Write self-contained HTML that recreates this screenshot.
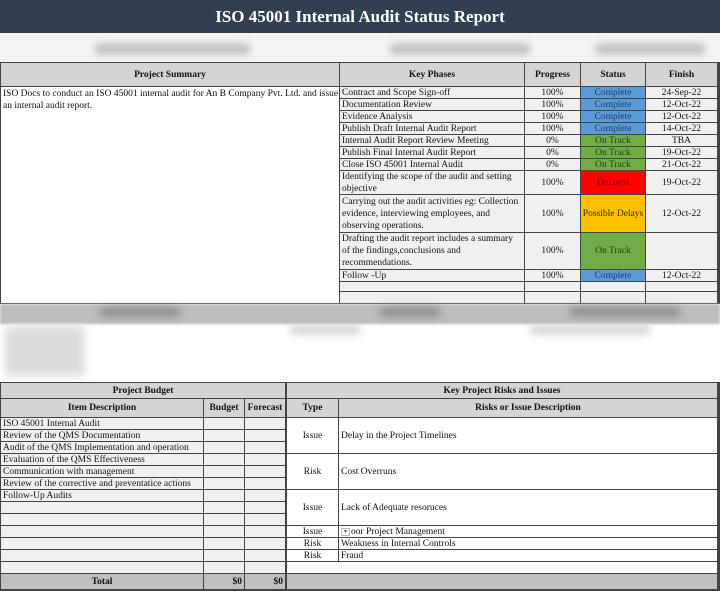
<!DOCTYPE html>
<html><head><meta charset="utf-8"><style>
*{margin:0;padding:0;box-sizing:border-box}
body{width:720px;height:591px;position:relative;background:#fff;font-family:"Liberation Serif",serif;font-size:9.5px;color:#111;overflow:hidden}
.a{position:absolute}
.c{position:absolute;border-right:1px solid #444;border-bottom:1px solid #444;display:flex;align-items:center;padding:0 2px;line-height:12px;overflow:hidden;white-space:nowrap}
.w{white-space:normal}
.m{justify-content:center;text-align:center}
.h{background:#d4d4d4;font-weight:bold;justify-content:center}
.g{background:#f0f0f0}
.bl{background:#5b9bd5;color:#1f3864}
.gr{background:#70ad47;color:#1e3a10}
.rd{background:#ff0000;color:#7a0000}
.yl{background:#ffc000;color:#3a2a00}
.blur{position:absolute;background:#bbb;filter:blur(4px);border-radius:3px}
</style></head><body>
<div class="a" style="left:0;top:0;width:720px;height:33px;background:#323f50;color:#fff;font-weight:bold;font-size:17px;display:flex;align-items:center;justify-content:center">ISO 45001 Internal Audit Status Report</div>
<div class="a" style="left:0;top:33px;width:720px;height:29px;background:#f4f4f4"></div>
<div class="blur" style="left:95px;top:44px;width:155px;height:10px"></div>
<div class="blur" style="left:390px;top:44px;width:140px;height:10px"></div>
<div class="blur" style="left:595px;top:44px;width:110px;height:10px"></div>
<div class="a" style="left:0;top:62px;width:720px;height:242px;border:1px solid #444;border-right:2px solid #444"></div>
<!-- header -->
<div class="c h" style="left:1px;top:63px;width:339px;height:24px">Project Summary</div>
<div class="c h" style="left:340px;top:63px;width:185px;height:24px">Key Phases</div>
<div class="c h" style="left:525px;top:63px;width:56px;height:24px">Progress</div>
<div class="c h" style="left:581px;top:63px;width:65px;height:24px">Status</div>
<div class="c h" style="left:646px;top:63px;width:72px;height:24px">Finish</div>
<div class="a w" style="left:3px;top:88px;width:336px;line-height:12px">ISO Docs to conduct an ISO 45001 internal audit for An B Company Pvt. Ltd. and issue an internal audit report.</div>
<div class="a" style="left:339px;top:87px;width:1px;height:217px;background:#444"></div>
<!-- rows -->
<div class="c g" style="left:340px;top:87px;width:185px;height:12px">Contract and Scope Sign-off</div><div class="c g m" style="left:525px;top:87px;width:56px;height:12px">100%</div><div class="c bl m" style="left:581px;top:87px;width:65px;height:12px">Complete</div><div class="c g m" style="left:646px;top:87px;width:72px;height:12px">24-Sep-22</div>
<div class="c g" style="left:340px;top:99px;width:185px;height:12px">Documentation Review</div><div class="c g m" style="left:525px;top:99px;width:56px;height:12px">100%</div><div class="c bl m" style="left:581px;top:99px;width:65px;height:12px">Complete</div><div class="c g m" style="left:646px;top:99px;width:72px;height:12px">12-Oct-22</div>
<div class="c g" style="left:340px;top:111px;width:185px;height:12px">Evidence Analysis</div><div class="c g m" style="left:525px;top:111px;width:56px;height:12px">100%</div><div class="c bl m" style="left:581px;top:111px;width:65px;height:12px">Complete</div><div class="c g m" style="left:646px;top:111px;width:72px;height:12px">12-Oct-22</div>
<div class="c g" style="left:340px;top:123px;width:185px;height:12px">Publish Draft Internal Audit Report</div><div class="c g m" style="left:525px;top:123px;width:56px;height:12px">100%</div><div class="c bl m" style="left:581px;top:123px;width:65px;height:12px">Complete</div><div class="c g m" style="left:646px;top:123px;width:72px;height:12px">14-Oct-22</div>
<div class="c g" style="left:340px;top:135px;width:185px;height:12px">Internal Audit Report Review Meeting</div><div class="c g m" style="left:525px;top:135px;width:56px;height:12px">0%</div><div class="c gr m" style="left:581px;top:135px;width:65px;height:12px">On Track</div><div class="c g m" style="left:646px;top:135px;width:72px;height:12px">TBA</div>
<div class="c g" style="left:340px;top:147px;width:185px;height:12px">Publish Final Internal Audit Report</div><div class="c g m" style="left:525px;top:147px;width:56px;height:12px">0%</div><div class="c gr m" style="left:581px;top:147px;width:65px;height:12px">On Track</div><div class="c g m" style="left:646px;top:147px;width:72px;height:12px">19-Oct-22</div>
<div class="c g" style="left:340px;top:159px;width:185px;height:12px">Close ISO 45001 Internal Audit</div><div class="c g m" style="left:525px;top:159px;width:56px;height:12px">0%</div><div class="c gr m" style="left:581px;top:159px;width:65px;height:12px">On Track</div><div class="c g m" style="left:646px;top:159px;width:72px;height:12px">21-Oct-22</div>
<div class="c g w" style="left:340px;top:171px;width:185px;height:24px">Identifying the scope of the audit and setting objective</div><div class="c g m" style="left:525px;top:171px;width:56px;height:24px">100%</div><div class="c rd m" style="left:581px;top:171px;width:65px;height:24px">Delayed</div><div class="c g m" style="left:646px;top:171px;width:72px;height:24px">19-Oct-22</div>
<div class="c g w" style="left:340px;top:195px;width:185px;height:38px">Carrying out the audit activities eg: Collection evidence, interviewing employees, and observing operations.</div><div class="c g m" style="left:525px;top:195px;width:56px;height:38px">100%</div><div class="c yl m" style="left:581px;top:195px;width:65px;height:38px">Possible Delays</div><div class="c g m" style="left:646px;top:195px;width:72px;height:38px">12-Oct-22</div>
<div class="c g w" style="left:340px;top:233px;width:185px;height:37px">Drafting the audit report includes a summary of the findings,conclusions and recommendations.</div><div class="c g m" style="left:525px;top:233px;width:56px;height:37px">100%</div><div class="c gr m" style="left:581px;top:233px;width:65px;height:37px">On Track</div><div class="c g m" style="left:646px;top:233px;width:72px;height:37px"></div>
<div class="c g" style="left:340px;top:270px;width:185px;height:12px">Follow -Up</div><div class="c g m" style="left:525px;top:270px;width:56px;height:12px">100%</div><div class="c bl m" style="left:581px;top:270px;width:65px;height:12px">Complete</div><div class="c g m" style="left:646px;top:270px;width:72px;height:12px">12-Oct-22</div>
<div class="c g" style="left:340px;top:282px;width:185px;height:10px"></div><div class="c g" style="left:525px;top:282px;width:56px;height:10px"></div><div class="c g" style="left:581px;top:282px;width:65px;height:10px"></div><div class="c g" style="left:646px;top:282px;width:72px;height:10px"></div>
<div class="c g" style="left:340px;top:292px;width:185px;height:12px"></div><div class="c g" style="left:525px;top:292px;width:56px;height:12px"></div><div class="c g" style="left:581px;top:292px;width:65px;height:12px"></div><div class="c g" style="left:646px;top:292px;width:72px;height:12px"></div>
<!-- blurred middle -->
<div class="a" style="left:0;top:304px;width:720px;height:20px;background:#bdbdbd;filter:blur(1px)"></div>
<div class="blur" style="left:100px;top:308px;width:80px;height:8px;background:#888"></div>
<div class="blur" style="left:380px;top:308px;width:60px;height:8px;background:#888"></div>
<div class="blur" style="left:570px;top:308px;width:110px;height:8px;background:#888"></div>
<div class="blur" style="left:5px;top:326px;width:80px;height:50px;background:#ddd"></div>
<div class="blur" style="left:290px;top:326px;width:70px;height:8px;background:#ccc"></div>
<div class="blur" style="left:530px;top:326px;width:120px;height:8px;background:#ccc"></div>
<!-- bottom -->
<div class="a" style="left:0;top:382px;width:720px;height:209px;border:1px solid #444;border-right:2px solid #444;border-bottom:2px solid #444"></div>
<div class="c h" style="left:1px;top:383px;width:285px;height:16px">Project Budget</div>
<div class="c h" style="left:286px;top:383px;width:432px;height:16px;border-left:1px solid #444">Key Project Risks and Issues</div>
<div class="c h" style="left:1px;top:399px;width:203px;height:19px">Item Description</div>
<div class="c h" style="left:204px;top:399px;width:41px;height:19px">Budget</div>
<div class="c h" style="left:245px;top:399px;width:41px;height:19px">Forecast</div>
<div class="c h" style="left:286px;top:399px;width:53px;height:19px;border-left:1px solid #444">Type</div>
<div class="c h" style="left:339px;top:399px;width:379px;height:19px">Risks or Issue Description</div>
<div class="c g" style="left:1px;top:418px;width:203px;height:12px">ISO 45001 Internal Audit</div><div class="c g" style="left:204px;top:418px;width:41px;height:12px"></div><div class="c g" style="left:245px;top:418px;width:41px;height:12px"></div>
<div class="c g" style="left:1px;top:430px;width:203px;height:12px">Review of the QMS Documentation</div><div class="c g" style="left:204px;top:430px;width:41px;height:12px"></div><div class="c g" style="left:245px;top:430px;width:41px;height:12px"></div>
<div class="c g" style="left:1px;top:442px;width:203px;height:12px">Audit of the QMS Implementation and operation</div><div class="c g" style="left:204px;top:442px;width:41px;height:12px"></div><div class="c g" style="left:245px;top:442px;width:41px;height:12px"></div>
<div class="c g" style="left:1px;top:454px;width:203px;height:12px">Evaluation of the QMS Effectiveness</div><div class="c g" style="left:204px;top:454px;width:41px;height:12px"></div><div class="c g" style="left:245px;top:454px;width:41px;height:12px"></div>
<div class="c g" style="left:1px;top:466px;width:203px;height:12px">Communication with management</div><div class="c g" style="left:204px;top:466px;width:41px;height:12px"></div><div class="c g" style="left:245px;top:466px;width:41px;height:12px"></div>
<div class="c g" style="left:1px;top:478px;width:203px;height:12px">Review of the corrective and preventatice actions</div><div class="c g" style="left:204px;top:478px;width:41px;height:12px"></div><div class="c g" style="left:245px;top:478px;width:41px;height:12px"></div>
<div class="c g" style="left:1px;top:490px;width:203px;height:12px">Follow-Up Audits</div><div class="c g" style="left:204px;top:490px;width:41px;height:12px"></div><div class="c g" style="left:245px;top:490px;width:41px;height:12px"></div>
<div class="c g" style="left:1px;top:502px;width:203px;height:12px"></div><div class="c g" style="left:204px;top:502px;width:41px;height:12px"></div><div class="c g" style="left:245px;top:502px;width:41px;height:12px"></div>
<div class="c g" style="left:1px;top:514px;width:203px;height:12px"></div><div class="c g" style="left:204px;top:514px;width:41px;height:12px"></div><div class="c g" style="left:245px;top:514px;width:41px;height:12px"></div>
<div class="c g" style="left:1px;top:526px;width:203px;height:12px"></div><div class="c g" style="left:204px;top:526px;width:41px;height:12px"></div><div class="c g" style="left:245px;top:526px;width:41px;height:12px"></div>
<div class="c g" style="left:1px;top:538px;width:203px;height:12px"></div><div class="c g" style="left:204px;top:538px;width:41px;height:12px"></div><div class="c g" style="left:245px;top:538px;width:41px;height:12px"></div>
<div class="c g" style="left:1px;top:550px;width:203px;height:12px"></div><div class="c g" style="left:204px;top:550px;width:41px;height:12px"></div><div class="c g" style="left:245px;top:550px;width:41px;height:12px"></div>
<div class="c g" style="left:1px;top:562px;width:203px;height:12px"></div><div class="c g" style="left:204px;top:562px;width:41px;height:12px"></div><div class="c g" style="left:245px;top:562px;width:41px;height:12px"></div>
<div class="a" style="left:286px;top:418px;width:1px;height:156px;background:#444"></div>
<div class="c m" style="left:287px;top:418px;width:52px;height:36px">Issue</div><div class="c" style="left:339px;top:418px;width:379px;height:36px">Delay in the Project Timelines</div>
<div class="c m" style="left:287px;top:454px;width:52px;height:36px">Risk</div><div class="c" style="left:339px;top:454px;width:379px;height:36px">Cost Overruns</div>
<div class="c m" style="left:287px;top:490px;width:52px;height:36px">Issue</div><div class="c" style="left:339px;top:490px;width:379px;height:36px">Lack of Adequate resoruces</div>
<div class="c m" style="left:287px;top:526px;width:52px;height:12px">Issue</div><div class="c" style="left:339px;top:526px;width:379px;height:12px"><span style="display:inline-block;width:9px;height:8px;border:1px solid #bbb;font-size:6px;line-height:6px;text-align:center;color:#555;margin-right:1px">▾</span>oor Project Management</div>
<div class="c m" style="left:287px;top:538px;width:52px;height:12px">Risk</div><div class="c" style="left:339px;top:538px;width:379px;height:12px">Weakness in Internal Controls</div>
<div class="c m" style="left:287px;top:550px;width:52px;height:12px">Risk</div><div class="c" style="left:339px;top:550px;width:379px;height:12px">Fraud</div>
<div class="c" style="left:287px;top:562px;width:431px;height:12px"></div>
<div class="c h" style="left:1px;top:574px;width:203px;height:16px;background:#bfbfbf">Total</div>
<div class="c h" style="left:204px;top:574px;width:41px;height:16px;background:#bfbfbf;justify-content:flex-end">$0</div>
<div class="c h" style="left:245px;top:574px;width:41px;height:16px;background:#bfbfbf;justify-content:flex-end">$0</div>
<div class="c h" style="left:286px;top:574px;width:432px;height:16px;background:#bfbfbf;border-left:1px solid #444"></div>
</body></html>
